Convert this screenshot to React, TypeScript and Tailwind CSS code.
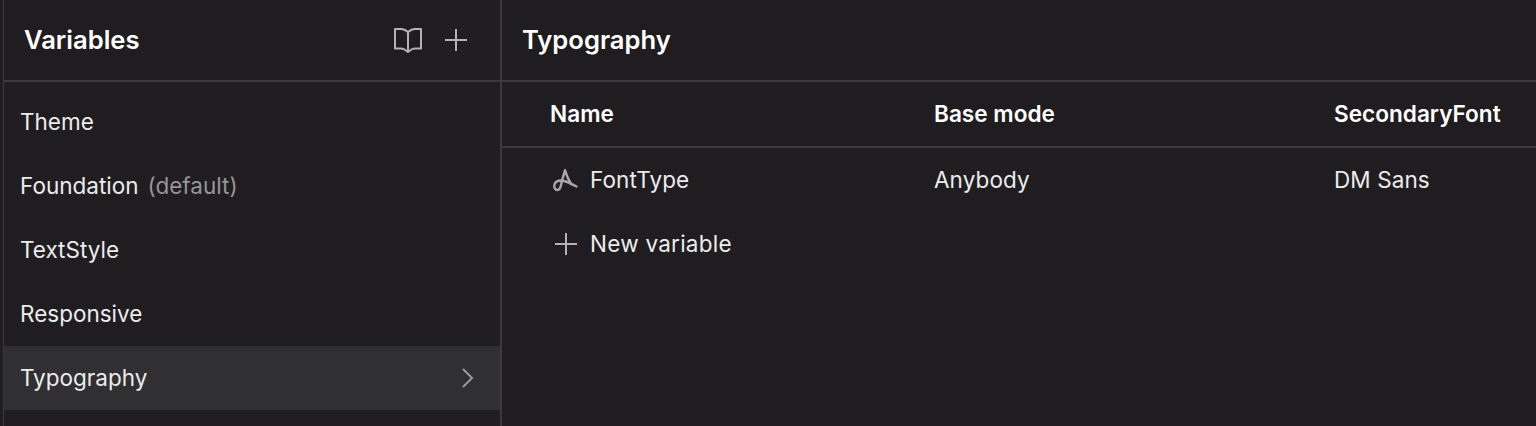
const sidebarItems = ["Theme", "Foundation", "TextStyle", "Responsive", "Typography"];

function IconBook() {
  return (
    <svg width="30" height="28" viewBox="0 0 30 28" fill="none" stroke="#b3b3b3" strokeWidth="2" strokeLinejoin="round">
      <path d="M15 6C13 4.500 11 3 8.500 3H2v19.500h6.500c2.500 0 4.500 2 6.500 3.500 2-1.500 4-3.500 6.500-3.500H28V3h-6.500C19 3 17 4.500 15 6Zm0 0v20" />
    </svg>
  );
}

function IconPlus() {
  return (
    <svg width="24" height="24" viewBox="0 0 24 24" fill="none" stroke="#b3b3b3" strokeWidth="2">
      <path d="M12 1v22M1 12h22" />
    </svg>
  );
}

function IconFontType() {
  return (
    <svg width="26" height="24" viewBox="0 0 26 24" fill="none" stroke="#a8a8a8" strokeWidth="2.400" strokeLinecap="round">
      <path d="M13 2.500C11.500 7 10 12.500 9 17c-.5 2.500-1.500 5-3.500 5C3 22 1.800 19.500 2.500 16.500 3.200 14 6 12.500 9 12.500c5 0 10 3.500 15.500 6" />
      <path d="M13 2.500C14.500 7 16.500 12 19 16" />
    </svg>
  );
}

export default function App() {
  return (
    <div className="flex h-[426px] w-[1536px] overflow-hidden bg-[#1f1d20] pl-[3px] font-['Inter',sans-serif] text-[22.5px] leading-[32px] text-[#ececec]">
      <aside className="flex w-[499px] shrink-0 flex-col border-l border-r-2 border-[#3a393c]">
        <div className="flex h-[82px] shrink-0 items-center justify-between border-b-2 border-[#3a393c] pl-[20px] pr-[32px]">
          <span className="text-[25.6px] font-semibold text-white">Variables</span>
          <div className="flex items-center gap-[21px]">
            <IconBook />
            <IconPlus />
          </div>
        </div>
        <nav className="flex flex-col pt-[8px]">
          {sidebarItems.map((item) => (
            <div
              key={item}
              className={
                item === "Typography"
                  ? "flex h-[64px] items-center justify-between bg-[#302f32] pl-[16px] pr-[24px]"
                  : "flex h-[64px] items-center pl-[16px]"
              }
            >
              <span>{item}</span>
              {item === "Foundation" && <span className="ml-[9px] text-[#969599]">(default)</span>}
              {item === "Typography" && (
                <svg width="16" height="24" viewBox="0 0 16 24" fill="none" stroke="#9a9a9a" strokeWidth="2">
                  <path d="M3 3l9 9-9 9" />
                </svg>
              )}
            </div>
          ))}
        </nav>
      </aside>
      <main className="flex min-w-0 flex-1 flex-col">
        <div className="flex h-[82px] shrink-0 items-center border-b-2 border-[#3a393c] pl-[20px] text-[25.6px] font-semibold text-white">
          Typography
        </div>
        <div className="flex h-[66px] shrink-0 items-center border-b-2 border-[#3a393c] text-[22.6px] font-semibold text-white">
          <div className="w-[432px] pl-[48px]">Name</div>
          <div className="w-[400px]">Base mode</div>
          <div>SecondaryFont</div>
        </div>
        <div className="flex h-[64px] shrink-0 items-center tracking-[0.1px]">
          <div className="flex w-[432px] items-center gap-[12px] pl-[50px]">
            <IconFontType />
            <span>FontType</span>
          </div>
          <div className="w-[400px]">Anybody</div>
          <div>DM Sans</div>
        </div>
        <div className="flex h-[64px] shrink-0 items-center gap-[12px] pl-[52px] tracking-[0.25px]">
          <IconPlus />
          <span>New variable</span>
        </div>
      </main>
    </div>
  );
}
